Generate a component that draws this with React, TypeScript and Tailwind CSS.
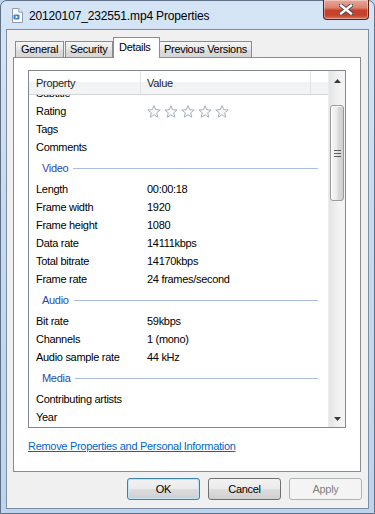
import React from "react";

function Star() {
  return (
    <svg width="14" height="13" viewBox="0 0 14 13">
      <polygon
        points="7,0.6 8.65,4.73 13.18,4.99 9.66,7.87 10.82,12.26 7,9.8 3.18,12.26 4.34,7.87 0.82,4.99 5.35,4.73"
        fill="#fbfcfd"
        stroke="#a7afb9"
        strokeWidth="1"
        strokeLinejoin="round"
      />
    </svg>
  );
}

function Row({ label, value }: { label: string; value?: React.ReactNode }) {
  return (
    <div className="flex h-[18px] items-center text-black">
      <div className="w-[111px] shrink-0 pl-[7px] whitespace-nowrap">{label}</div>
      <div className="pl-[7px] whitespace-nowrap">{value}</div>
    </div>
  );
}

function Group({ label }: { label: string }) {
  return (
    <div className="flex h-[24px] items-center pl-[13px] pr-[10px]">
      <span className="text-[#2b46b4]">{label}</span>
      <div className="ml-[5px] h-px flex-1 bg-[#a9bde6]" />
    </div>
  );
}

function Arrow({ up }: { up?: boolean }) {
  return (
    <svg width="7" height="4" viewBox="0 0 7 4">
      {up ? (
        <polygon points="3.5,0 7,4 0,4" fill="#3a3a3a" />
      ) : (
        <polygon points="0,0 7,0 3.5,4" fill="#3a3a3a" />
      )}
    </svg>
  );
}

export default function App() {
  const btn =
    "w-[73px] h-[22px] rounded-[3px] border flex items-center justify-center bg-[linear-gradient(#f2f2f2,#ebebeb_50%,#dddddd_50%,#cfcfcf)]";
  return (
    <div className="w-[375px] h-[514px] overflow-hidden bg-[#bcd3ec] font-['Liberation_Sans',Arial,sans-serif] text-[11px] tracking-[-0.3px]">
      <div className="w-[375px] h-[514px] flex flex-col rounded-t-[7px] border border-[#607187] bg-[linear-gradient(180deg,#d5e5f6_0%,#c6dbf1_40%,#bcd4ef_100%)] px-[5px] pb-[4px]">
        {/* Title bar */}
        <div className="h-[28px] shrink-0 flex items-start">
          <div className="ml-[5px] mt-[7px] w-[12px] h-[15px]">
            <svg width="12" height="15" viewBox="0 0 12 15">
              <path d="M1.5 0.5 H7.8 L11.5 4.2 V14.5 H1.5 Z" fill="#ffffff" stroke="#8d9bad" />
              <path d="M7.8 0.5 V4.2 H11.5" fill="#e8edf3" stroke="#8d9bad" />
              <rect x="2.5" y="6.5" width="6" height="5" rx="1" fill="#3d7fd0" />
              <polygon points="4.6,7.6 7.2,9 4.6,10.4" fill="#ffffff" />
            </svg>
          </div>
          <div className="ml-[6px] mt-[7px] text-[12px] tracking-[-0.15px] text-black leading-[16px] whitespace-nowrap">
            20120107_232551.mp4 Properties
          </div>
          <div className="flex-1" />
          <div className="-mt-[1px] w-[46px] h-[20px] rounded-b-[4px] border border-t-0 border-[#5b2118] bg-[linear-gradient(180deg,#e9a79a_0%,#dc8470_40%,#c8402a_55%,#c4432d_80%,#d8735c_100%)] flex items-center justify-center shadow-[inset_0_0_0_1px_rgba(255,255,255,0.35)]">
            <svg width="14" height="11" viewBox="0 0 14 11">
              <path d="M2 1.5 L12 9.5 M12 1.5 L2 9.5" stroke="#4a4a4a" strokeWidth="4.2" strokeLinecap="square" />
              <path d="M2 1.5 L12 9.5 M12 1.5 L2 9.5" stroke="#ffffff" strokeWidth="2.3" strokeLinecap="square" />
            </svg>
          </div>
        </div>

        {/* Client area */}
        <div className="flex-1 flex flex-col border border-[#7d8ea3] bg-[#f0f0f0] pt-[7px]">
          {/* Tabs */}
          <div className="flex items-end h-[20px] ml-[8px] relative z-10">
            <div className="w-[49px] h-[16px] border border-b-0 border-[#898c95] bg-[linear-gradient(#f6f6f6,#e6e6e6_50%,#dcdcdc_50%,#d6d6d6)] pl-[5px] leading-[15px] text-black whitespace-nowrap">
              General
            </div>
            <div className="ml-[1px] w-[48px] h-[16px] border border-b-0 border-[#898c95] bg-[linear-gradient(#f6f6f6,#e6e6e6_50%,#dcdcdc_50%,#d6d6d6)] pl-[4px] leading-[15px] text-black whitespace-nowrap">
              Security
            </div>
            <div className="w-[47px] h-[21px] -mb-[1px] border border-b-0 border-[#898c95] bg-white pl-[5px] leading-[18px] text-black whitespace-nowrap">
              Details
            </div>
            <div className="w-[92px] h-[16px] border border-b-0 border-l-0 border-[#898c95] bg-[linear-gradient(#f6f6f6,#e6e6e6_50%,#dcdcdc_50%,#d6d6d6)] pl-[4px] leading-[15px] text-black whitespace-nowrap">
              Previous Versions
            </div>
          </div>

          {/* Panel */}
          <div className="ml-[6px] mr-[7px] h-[415px] border border-[#898c95] bg-white flex flex-col">
            <div className="ml-[14px] mt-[12px] w-[318px] h-[358px] border border-[#828790] flex">
              {/* list content */}
              <div className="w-[299px] flex flex-col">
                <div className="h-[24px] shrink-0 flex border-b border-[#d5d5d5] bg-[linear-gradient(#ffffff,#ffffff_45%,#f1f2f4_50%,#f3f4f6)] text-[#1e1e1e]">
                  <div className="w-[112px] pl-[7px] pt-[2px] leading-[21px] border-r border-[#e3e4e6]">Property</div>
                  <div className="w-[170px] pl-[6px] pt-[2px] leading-[21px] border-r border-[#e3e4e6]">Value</div>
                  <div className="flex-1" />
                </div>
                <div className="flex-1 overflow-hidden">
                  <div className="-mt-[11px]">
                    <Row label="Subtitle" />
                    <Row
                      label="Rating"
                      value={
                        <span className="flex gap-[3px] mt-[1px]">
                          <Star />
                          <Star />
                          <Star />
                          <Star />
                          <Star />
                        </span>
                      }
                    />
                    <Row label="Tags" />
                    <Row label="Comments" />
                    <Group label="Video" />
                    <Row label="Length" value="00:00:18" />
                    <Row label="Frame width" value="1920" />
                    <Row label="Frame height" value="1080" />
                    <Row label="Data rate" value="14111kbps" />
                    <Row label="Total bitrate" value="14170kbps" />
                    <Row label="Frame rate" value="24 frames/second" />
                    <Group label="Audio" />
                    <Row label="Bit rate" value="59kbps" />
                    <Row label="Channels" value="1 (mono)" />
                    <Row label="Audio sample rate" value="44 kHz" />
                    <Group label="Media" />
                    <Row label="Contributing artists" />
                    <Row label="Year" />
                  </div>
                </div>
              </div>
              {/* scrollbar */}
              <div className="w-[17px] flex flex-col bg-[linear-gradient(90deg,#e4e4e4,#f2f2f2_60%,#f4f4f4)] border-l border-[#ececec]">
                <div className="h-[17px] shrink-0 flex items-center justify-center pt-[2px]">
                  <Arrow up />
                </div>
                <div className="h-[17px] shrink-0" />
                <div className="mx-[1px] h-[96px] shrink-0 rounded-[3px] border border-[#9a9a9a] bg-[linear-gradient(90deg,#f7f7f7,#ececec_45%,#dadada_60%,#cfcfcf)] flex flex-col items-center justify-center gap-[2px] shadow-[inset_1px_1px_0_#ffffff]">
                  <div className="w-[7px] h-px bg-[#5e5e5e]" />
                  <div className="w-[7px] h-px bg-[#5e5e5e]" />
                  <div className="w-[7px] h-px bg-[#5e5e5e]" />
                </div>
                <div className="flex-1" />
                <div className="h-[17px] shrink-0 flex items-center justify-center">
                  <Arrow />
                </div>
              </div>
            </div>
            <div className="ml-[14px] mt-[11px] leading-[15px] text-[#0066cc] underline whitespace-nowrap">
              Remove Properties and Personal Information
            </div>
          </div>

          {/* Buttons */}
          <div className="mt-[6px] flex justify-end gap-[8px] pr-[6px]">
            <div className={btn + " border-[#3c7fb1] shadow-[inset_0_0_0_1px_#c3e4f7] text-black"}>OK</div>
            <div className={btn + " border-[#707070] text-black"}>Cancel</div>
            <div className="w-[73px] h-[22px] rounded-[3px] border border-[#adb2b5] bg-[#f4f4f4] flex items-center justify-center text-[#838383]">
              Apply
            </div>
          </div>
        </div>
      </div>
    </div>
  );
}
